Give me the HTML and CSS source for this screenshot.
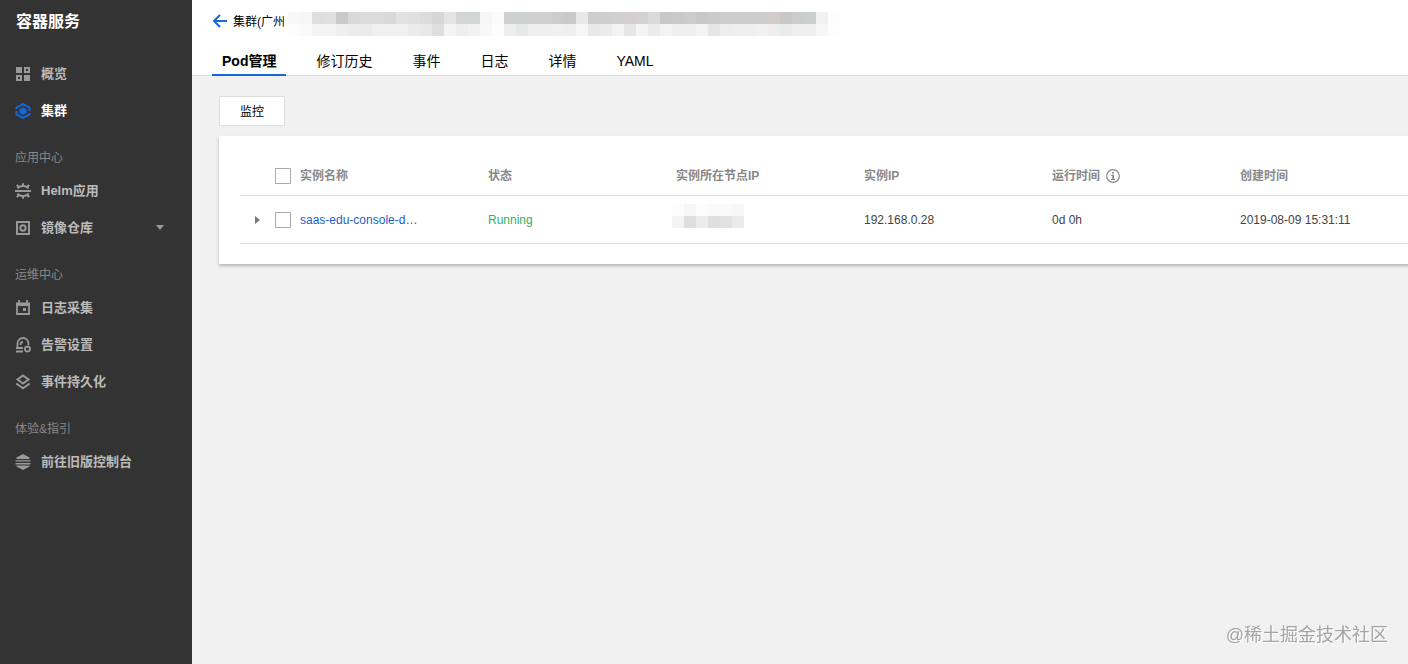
FILE: index.html
```html
<!DOCTYPE html>
<html lang="zh-CN">
<head>
  <meta charset="UTF-8" />
  <title>容器服务</title>
  <link rel="stylesheet" href="styles.css">
</head>
<body>

  <aside class="sidebar">
    <h1 class="logo">容器服务</h1>

    <nav>
      <a class="item" href="#">
        <svg class="icon" viewBox="0 0 16 16"><path fill="currentColor" d="M1 1h6v6H1zM9 9h6v6H9z"/><path fill="none" stroke="currentColor" stroke-width="2" d="M10 2h4v4h-4zM2 10h4v4H2z"/></svg>
        概览
      </a>
      <a class="item active" href="#">
        <svg class="icon" viewBox="0 0 16 16"><g fill="none" stroke="currentColor" stroke-width="2"><path d="M1.500 6V4.600L8 1.100l6.500 3.500V8M14.500 10v1.400L8 14.900l-6.500-3.500V8"/></g><path fill="currentColor" d="M8 4.300l3.500 1.900v3.800L8 11.900 4.500 10V6.200z"/></svg>
        集群
      </a>

      <h2 class="group">应用中心</h2>
      <a class="item" href="#">
        <svg class="icon" viewBox="0 0 16 16"><path fill="none" stroke="currentColor" stroke-width="2" d="M0 8h16M2.500 5.500C4.500 2.300 11.500 2.300 13.500 5.500M2.500 10.500c2 3.200 9 3.200 11 0"/><path fill="none" stroke="currentColor" stroke-width="2" d="M8 .3v3M1.800 1.800l2 2.200M14.200 1.800l-2 2.200M8 15.700v-3M1.800 14.200l2-2.200M14.200 14.200l-2-2.200"/></svg>
        Helm应用
      </a>
      <a class="item" href="#">
        <svg class="icon" viewBox="0 0 16 16"><g fill="none" stroke="currentColor" stroke-width="2"><path d="M2 2h12v12H2z"/><circle cx="8" cy="8" r="2.700"/></g></svg>
        镜像仓库
        <span class="caret"></span>
      </a>

      <h2 class="group">运维中心</h2>
      <a class="item" href="#">
        <svg class="icon" viewBox="0 0 16 16"><path fill="none" stroke="currentColor" stroke-width="1.800" d="M2 4h12v10H2zM4 0v4M12 0v4"/><path fill="currentColor" d="M1 2.500h14V6H1zM8 8h3v3H8z"/></svg>
        日志采集
      </a>
      <a class="item" href="#">
        <svg class="icon" viewBox="0 0 16 16"><g fill="none" stroke="currentColor" stroke-width="1.800"><path d="M2.500 11V6.500a5.500 5.500 0 0 1 11 0V8M1 11h7M1 14.500h7M5.500 8c0-2 .8-3 2.500-3"/><circle cx="12.500" cy="12" r="2.500"/></g></svg>
        告警设置
      </a>
      <a class="item" href="#">
        <svg class="icon" viewBox="0 0 16 16"><path fill="none" stroke="currentColor" stroke-width="2" d="M8 1.500l5.500 4L8 9.500l-5.500-4zM1.200 9.500L8 14.300l6.800-4.800"/></svg>
        事件持久化
      </a>

      <h2 class="group">体验&amp;指引</h2>
      <a class="item" href="#">
        <svg class="icon" viewBox="0 0 16 16"><path fill="currentColor" d="M8 0l6.500 3.500V5h-13V3.500zM.5 6.200h15v1.400H.5zM.5 9h15v1.400H.5zM1.500 11.600h13v1L8 16l-6.500-3.400z"/></svg>
        前往旧版控制台
      </a>
    </nav>
  </aside>

  <main class="main">
    <header class="header">
      <div class="crumb">
        <a class="back" href="#" aria-label="返回">
          <svg class="back-icon" viewBox="0 0 16 16"><path fill="none" stroke="currentColor" stroke-width="2" d="M15 8H2M8 2L2 8l6 6"/></svg>
        </a>
        <span class="crumb-text">集群(广州</span>
        <svg class="mosaic" viewBox="0 0 46 2" preserveAspectRatio="none" shape-rendering="crispEdges" id="crumbMosaic"></svg>
      </div>
      <nav class="tabs">
        <a class="tab current" href="#">Pod管理</a>
        <a class="tab" href="#">修订历史</a>
        <a class="tab" href="#">事件</a>
        <a class="tab" href="#">日志</a>
        <a class="tab" href="#">详情</a>
        <a class="tab" href="#">YAML</a>
      </nav>
    </header>

    <section class="content">
      <button class="btn" type="button">监控</button>

      <div class="card">
        <table class="table">
          <thead>
            <tr>
              <th class="pick"><div class="pick-box"><input class="check" type="checkbox" aria-label="全选"></div></th>
              <th>实例名称</th>
              <th>状态</th>
              <th>实例所在节点IP</th>
              <th>实例IP</th>
              <th>
                <div class="with-icon">运行时间
                  <svg class="info" viewBox="0 0 14 14"><circle cx="7" cy="7" r="6.300" fill="none" stroke="currentColor" stroke-width="1.200"/><path fill="currentColor" d="M6 3h2v1.500H6zM5.300 5.800H8v4h1V11H5v-1.200h1.300V7h-1z"/></svg>
                </div>
              </th>
              <th>创建时间</th>
            </tr>
          </thead>
          <tbody>
            <tr>
              <td class="pick">
                <div class="pick-box">
                  <button class="expand" type="button" aria-label="展开"></button>
                  <input class="check" type="checkbox" aria-label="选择实例">
                </div>
              </td>
              <td><a class="name" href="#">saas-edu-console-d…</a></td>
              <td class="running">Running</td>
              <td><svg class="mosaic-ip" viewBox="0 0 6 2" preserveAspectRatio="none" shape-rendering="crispEdges" id="ipMosaic"></svg></td>
              <td>192.168.0.28</td>
              <td>0d 0h</td>
              <td>2019-08-09 15:31:11</td>
            </tr>
          </tbody>
        </table>
      </div>
    </section>
  </main>

  <div class="watermark">@稀土掘金技术社区</div>

  <script src="script.js"></script>
</body>
</html>
```
FILE: styles.css
```css
* { box-sizing: border-box; }

body {
  margin: 0;
  display: flex;
  min-height: 100vh;
  overflow-x: hidden;
  background: #f1f1f1;
  color: #444;
  font-family: "Liberation Sans", "Noto Sans CJK SC", sans-serif;
  font-size: 12px;
  line-height: 20px;
}
a { color: inherit; text-decoration: none; }

/* sidebar */
.sidebar {
  flex: none;
  width: 192px;
  background: #333;
  color: #bbb;
}
.logo {
  margin: 0;
  padding: 12px 16px 23px;
  color: #fff;
  font-size: 16px;
  line-height: 20px;
}
.item {
  display: flex;
  align-items: center;
  gap: 10px;
  height: 37px;
  padding: 0 28px 0 15px;
  font-size: 13px;
  font-weight: bold;
}
.active { color: #fff; }
.icon {
  width: 16px;
  height: 16px;
  color: #999;
}
.active .icon { color: #1468dc; }
.group {
  margin: 0;
  padding: 19px 15px 4px;
  color: #888;
  font-size: 12px;
  font-weight: normal;
}
.caret {
  margin-left: auto;
  border: 4px solid transparent;
  border-top: 5px solid #999;
  border-bottom: 0;
}

/* header */
.main {
  flex: 1;
  min-width: 0;
  overflow: hidden;
}
.header {
  background: #fff;
  border-bottom: 1px solid #ddd;
}
.crumb {
  display: flex;
  align-items: center;
  height: 42px;
  padding-left: 20px;
  color: #000;
}
.back {
  display: flex;
  margin-right: 5px;
  color: #1468dc;
}
.back-icon {
  width: 16px;
  height: 16px;
}
.crumb-text {
  width: 51px;
  margin-right: 4px;
  padding-top: 2px;
  overflow: hidden;
  white-space: nowrap;
}
.mosaic {
  width: 552px;
  height: 24px;
  margin-top: 6px;
}
.tabs {
  display: flex;
  gap: 20px;
  padding-left: 20px;
}
.tab {
  height: 34px;
  margin-bottom: -1px;
  padding: 0 10px;
  color: #000;
  font-size: 14px;
  line-height: 38px;
}
.current {
  border-bottom: 2px solid #1468dc;
  font-weight: bold;
}

/* content */
.content { padding: 20px 0 20px 27px; }
.btn {
  display: block;
  width: 66px;
  height: 30px;
  padding: 2px 0 0;
  border: 1px solid #ddd;
  background: #fff;
  color: #000;
  font: inherit;
}
/* the last column runs past the right edge */
.card {
  margin: 10px -20px 0 0;
  padding: 20px 0 20px 21px;
  background: #fff;
  box-shadow: 0 2px 3px rgba(0, 0, 0, 0.25);
}
.table {
  width: 100%;
  table-layout: fixed;
  border-collapse: separate;
  border-spacing: 0;
}
.table th, .table td {
  padding: 0;
  border-bottom: 1px solid #ddd;
  text-align: left;
  white-space: nowrap;
}
.table th {
  height: 40px;
  color: #888;
}
.table td { height: 48px; }
.table .pick { width: 60px; }
.pick-box {
  display: flex;
  align-items: center;
  justify-content: flex-end;
  gap: 15px;
  padding-right: 9px;
}
.check {
  appearance: none;
  width: 16px;
  height: 16px;
  margin: 0;
  border: 1px solid #aaa;
  background: #fff;
}
.expand {
  width: 0;
  height: 0;
  padding: 0;
  background: none;
  border: 4px solid transparent;
  border-left: 5px solid #777;
  border-right: 0;
}
.with-icon {
  display: flex;
  align-items: center;
  gap: 6px;
}
.info {
  width: 14px;
  height: 14px;
}
.table .name { color: #1a5fc4; }
.table .running { color: #2fb26a; }
.mosaic-ip {
  display: block;
  width: 72px;
  height: 24px;
  margin: 0 0 8px -4px;
}

.watermark {
  position: fixed;
  right: 20px;
  bottom: 16px;
  color: #a4a4a4;
  font-size: 18px;
  line-height: 26px;
  text-shadow: 1px 1px 0 #fff;
}
```
FILE: script.js
```js
// masked text, one colour per block
const crumbTop = 'f8f8f8 f6f6f6 dedede e0e0e0 c9c9c9 d8d8d8 dcdcdc dcdcdc d8d8d8 e2e2e2 e0e0e0 dcdcdc d6d6d6 e4e4e4 d2d6d6 d2d6d6 f6f6f6 fbfbfb cdd1d0 cdd1d0 cfd1d0 d0d0d0 cccccc c9c9c9 e8e8e8 cecece cecece d0d0d0 d6cfcf d2d2d2 dadad6 c8c8c8 c9c9c9 cccccc c8c8c8 cbcbcb cdcdcd cdcdcd cdcdcd cdcdcd d3cccb c8c8c8 c9cdcd c8d0d0 f2f2f2 fdfdfd';
const crumbBottom = 'fcfcfc fafafa f4f4f4 f4f4f4 efefef ececec ebebeb f0f0f0 f0f0f0 f0f0f0 ebebeb e8e8e8 dedede f4f4f4 eeeeee f2f2f2 f8f8f8 fdfdfd eeeeee e7e9e8 efefef efefef f0f0f0 efefef f6f6f6 e8e8e8 ebebeb f3f3f3 e6e6e6 f4f4f4 ebebeb f3f3f3 efefef efefef f3f3f3 e6e6e6 eeeeee efefef efefef f1f1f1 eeeeee ebebeb efefef efefef f6f6f6 fefefe';
const ipTop = 'fdfdfd f6f6f6 fcfcfc fafafa fafafa f7f7f7';
const ipBottom = 'f3f3f3 dedede ececec dfdfdf e2e2e2 ebebeb';

function drawMosaic(id, rows) {
  const svg = document.getElementById(id);
  rows.forEach((row, y) => {
    row.split(' ').forEach((color, x) => {
      const rect = document.createElementNS('http://www.w3.org/2000/svg', 'rect');
      rect.setAttribute('x', x);
      rect.setAttribute('y', y);
      rect.setAttribute('width', 1);
      rect.setAttribute('height', 1);
      rect.setAttribute('fill', '#' + color);
      svg.appendChild(rect);
    });
  });
}

drawMosaic('crumbMosaic', [crumbTop, crumbBottom]);
drawMosaic('ipMosaic', [ipTop, ipBottom]);
```
